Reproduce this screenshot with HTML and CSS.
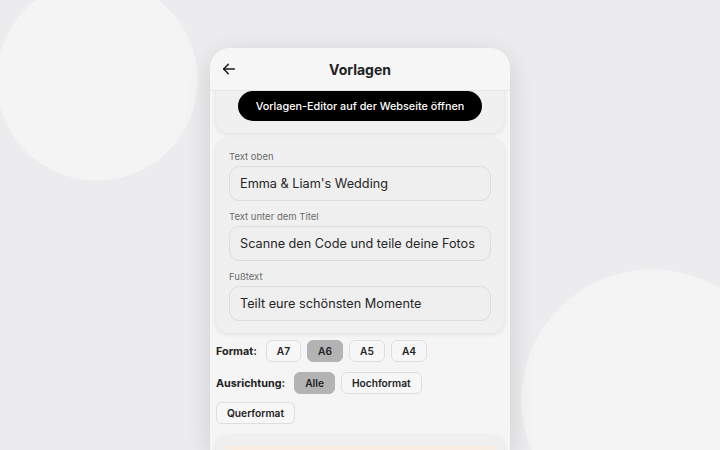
FILE: index.html
```html
<!DOCTYPE html>
<html lang="de">
<head>
<meta charset="utf-8">
<title>Vorlagen</title>
<link rel="stylesheet" href="styles.css">
</head>
<body>
<main class="stage">
  <section class="phone">
    <header class="topbar">
      <button class="back" aria-label="Zurück">
        <svg width="16" height="16" viewBox="0 0 24 24" fill="none" stroke="#1a1a1a" stroke-width="2.2" stroke-linecap="round" stroke-linejoin="round"><path d="M20 12H4"/><path d="M11 5l-7 7 7 7"/></svg>
      </button>
      <h1 class="title">Vorlagen</h1>
      <span class="spacer"></span>
    </header>
    <div class="scroll">
      <div class="card card-editor">
        <button class="pill">Vorlagen-Editor auf der Webseite öffnen</button>
      </div>
      <div class="card card-fields">
        <div class="field">
          <label class="label">Text oben</label>
          <div class="input">Emma &amp; Liam's Wedding</div>
        </div>
        <div class="field">
          <label class="label">Text unter dem Titel</label>
          <div class="input">Scanne den Code und teile deine Fotos</div>
        </div>
        <div class="field">
          <label class="label">Fußtext</label>
          <div class="input">Teilt eure schönsten Momente</div>
        </div>
      </div>
      <div class="opts">
        <span class="opt-label">Format:</span>
        <button class="chip">A7</button>
        <button class="chip chip-on">A6</button>
        <button class="chip">A5</button>
        <button class="chip">A4</button>
      </div>
      <div class="opts opts-2">
        <span class="opt-label">Ausrichtung:</span>
        <button class="chip chip-on">Alle</button>
        <button class="chip">Hochformat</button>
        <button class="chip">Querformat</button>
      </div>
      <div class="card card-next">
        <div class="peach"></div>
      </div>
    </div>
  </section>
</main>
</body>
</html>
```

FILE: styles.css
```css
* { box-sizing: border-box; }
html, body { margin: 0; padding: 0; }
body {
  width: 720px;
  height: 450px;
  overflow: hidden;
  background:
    radial-gradient(circle at 97px 80px, #f4f4f5 100px, rgba(244,244,245,0) 101px),
    radial-gradient(circle at 652px 400px, #f4f4f5 130px, rgba(244,244,245,0) 131px),
    #ececee;
  font-family: Inter, "Noto Sans", sans-serif;
}
.stage {
  display: flex;
  justify-content: center;
  padding-top: 48px;
}
.phone {
  width: 300px;
  height: 402px;
  background: #f5f5f5;
  border-radius: 20px 20px 0 0;
  box-shadow: 0 6px 26px rgba(0,0,0,0.13);
  overflow: hidden;
  display: flex;
  flex-direction: column;
}
.topbar {
  height: 43px;
  flex: none;
  display: flex;
  align-items: center;
  padding: 0 10px;
  border-bottom: 1px solid #e6e6e6;
  background: #f6f6f6;
  position: relative;
  z-index: 2;
}
.back {
  border: 0;
  background: none;
  padding: 0;
  width: 18px;
  height: 18px;
  display: flex;
  align-items: center;
  justify-content: center;
}
.title {
  flex: 1;
  margin: 0;
  text-align: center;
  font-size: 14px;
  font-weight: 700;
  color: #222;
}
.spacer { width: 18px; }
.scroll {
  flex: 1;
  overflow: hidden;
  padding: 0 6px;
}
.card {
  background: #f0f0f0;
  border-radius: 12px;
  box-shadow: 0 1px 5px rgba(0,0,0,0.10);
}
.card-editor {
  margin-top: -12px;
  padding: 12px 0 12px;
  display: flex;
  justify-content: center;
}
.pill {
  width: 244px;
  height: 30px;
  border: 0;
  border-radius: 15px;
  background: #000;
  color: #fff;
  font-family: Inter, sans-serif;
  font-size: 10.8px;
  font-weight: 500;
}
.card-fields {
  margin-top: 6px;
  padding: 11px 13px 12px;
  display: flex;
  flex-direction: column;
  gap: 9px;
}
.field { display: flex; flex-direction: column; }
.label {
  font-size: 9.5px;
  line-height: 14px;
  color: #6b6b6b;
  margin-bottom: 2px;
}
.input {
  height: 35px;
  border: 1px solid #dcdcdc;
  border-radius: 10px;
  background: #efefef;
  display: flex;
  align-items: center;
  padding: 0 10px;
  font-size: 12.7px;
  color: #262626;
  white-space: nowrap;
}
.opts {
  display: flex;
  flex-wrap: wrap;
  align-items: center;
  column-gap: 6px;
  row-gap: 8px;
  margin-top: 7px;
}
.opts-2 { margin-top: 10px; }
.opt-label {
  font-size: 10.8px;
  font-weight: 700;
  color: #222;
  margin-right: 3px;
}
.chip {
  height: 22px;
  padding: 0 10px;
  border: 1px solid #dedede;
  border-radius: 6px;
  background: #f7f7f7;
  font-family: Inter, sans-serif;
  font-size: 10.2px;
  font-weight: 600;
  color: #222;
}
.chip-on {
  background: #b3b3b3;
  border-color: #b3b3b3;
}
.card-next {
  margin-top: 12px;
  padding: 10px 8px;
  height: 60px;
}
.peach {
  height: 40px;
  border-radius: 8px;
  background: #f9ece0;
}
```
